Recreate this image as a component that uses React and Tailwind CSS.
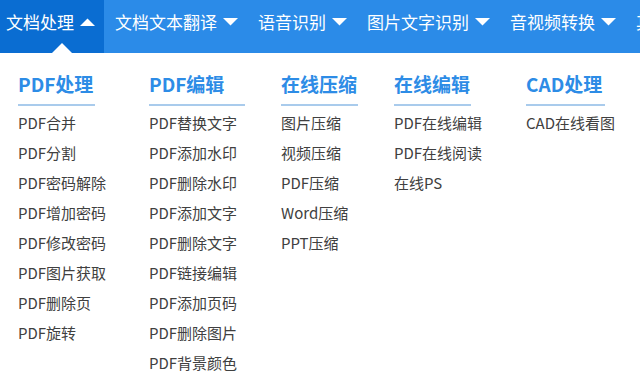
import { useState } from 'react'

const NAV = [
  { label: '文档处理', active: true },
  { label: '文档文本翻译' },
  { label: '语音识别' },
  { label: '图片文字识别' },
  { label: '音视频转换' },
  { label: '其他' },
]

const COLUMNS = [
  {
    title: 'PDF处理',
    width: 'w-[131px]',
    line: 'w-[77px]',
    items: ['PDF合并', 'PDF分割', 'PDF密码解除', 'PDF增加密码', 'PDF修改密码', 'PDF图片获取', 'PDF删除页', 'PDF旋转'],
  },
  {
    title: 'PDF编辑',
    width: 'w-[132px]',
    line: 'w-[96px]',
    items: ['PDF替换文字', 'PDF添加水印', 'PDF删除水印', 'PDF添加文字', 'PDF删除文字', 'PDF链接编辑', 'PDF添加页码', 'PDF删除图片', 'PDF背景颜色'],
  },
  {
    title: '在线压缩',
    width: 'w-[113px]',
    line: 'w-[77px]',
    items: ['图片压缩', '视频压缩', 'PDF压缩', 'Word压缩', 'PPT压缩'],
  },
  {
    title: '在线编辑',
    width: 'w-[132px]',
    line: 'w-[77px]',
    items: ['PDF在线编辑', 'PDF在线阅读', '在线PS'],
  },
  {
    title: 'CAD处理',
    width: 'w-[110px]',
    line: 'w-[79px]',
    items: ['CAD在线看图'],
  },
]

function Caret({ up }) {
  return (
    <svg width="15" height="10" viewBox="0 0 15 10" className="shrink-0">
      {up ? <path d="M0 9 L7.5 1.5 L15 9 Z" fill="#fff" /> : <path d="M0 1 L15 1 L7.5 8.5 Z" fill="#fff" />}
    </svg>
  )
}

export default function App() {
  const [open] = useState(0)

  return (
    <div
      className="w-[640px] h-[381px] overflow-hidden bg-white"
      style={{ fontFamily: '"Noto Sans CJK SC", "Microsoft YaHei", sans-serif' }}
    >
      {/* Top nav */}
      <div className="flex h-[53px] bg-[#2b8be8] whitespace-nowrap">
        {NAV.map((n, i) => (
          <div
            key={n.label}
            className={`relative flex items-center gap-[6px] h-full shrink-0 ${i === 0 ? 'pl-[6px] pr-[9px]' : 'pl-[11px] pr-[9px]'} ${i === open ? 'bg-[#0a6dd2]' : ''}`}
          >
            <span className="text-[17px] leading-none text-white pb-[10px]">{n.label}</span>
            <span className="pb-[10px]">
              <Caret up={i === open} />
            </span>
            {i === open && (
              <span className="absolute bottom-0 left-[52px] w-0 h-0 border-l-[10px] border-r-[10px] border-b-[10px] border-l-transparent border-r-transparent border-b-white" />
            )}
          </div>
        ))}
      </div>

      {/* Dropdown panel */}
      <div className="flex pl-[18px] pt-[18px]">
        {COLUMNS.map(col => (
          <div key={col.title} className={`${col.width} shrink-0`}>
            <div className="text-[19px] font-bold leading-[26px] text-[#2d8ce6]">{col.title}</div>
            <div className={`${col.line} h-[2px] bg-[#a9cbec] mt-[7px] mb-[2px]`} />
            {col.items.map(item => (
              <div key={item} className="text-[15px] leading-[30px] text-[#404040] whitespace-nowrap">
                {item}
              </div>
            ))}
          </div>
        ))}
      </div>
    </div>
  )
}
